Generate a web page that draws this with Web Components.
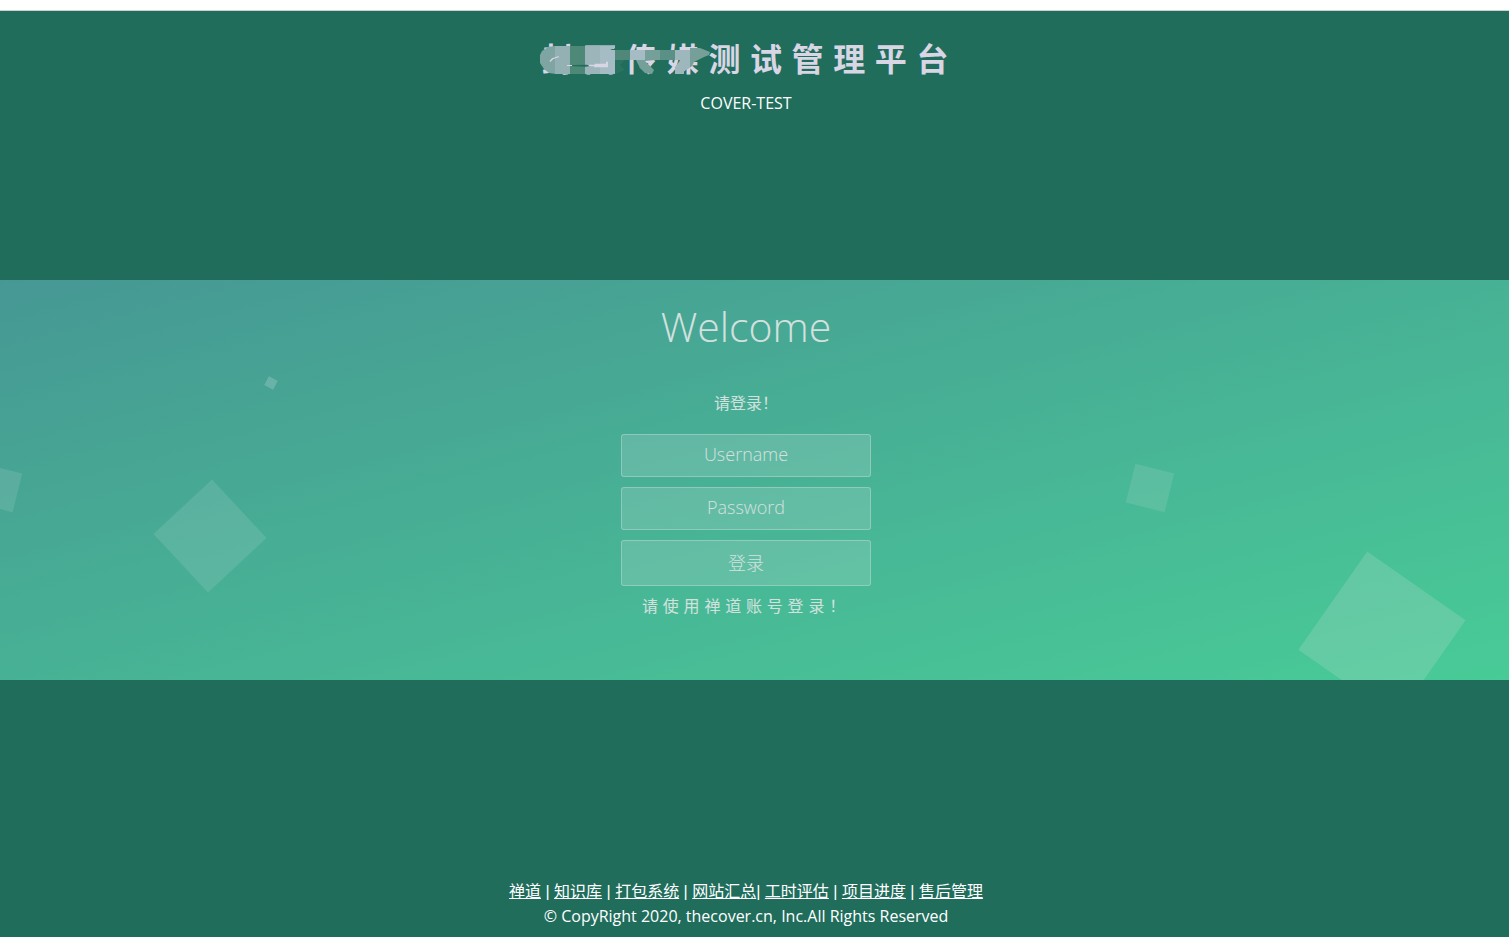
<!DOCTYPE html>
<html lang="zh-CN">
<head>
<meta charset="utf-8">
<title>测试管理平台</title>
<style>
  body {
    margin: 0;
    font: 16px/24px "Open Sans", "Noto Sans CJK SC", sans-serif;
    color: #fff;
    background: #206d5c;
  }
</style>
</head>
<body>
<login-page></login-page>

<template id="login-page">
  <style>
    :host {
      --gutter: 17px;
      display: flex;
      flex-direction: column;
      min-height: 100vh;
      box-sizing: border-box;
      border-top: 10px solid #fff;
    }
    site-header { min-height: 270px; }
    site-footer { flex: 1; }
  </style>
  <site-header><span slot="title">封面传媒测试管理平台</span><span slot="subtitle">COVER-TEST</span></site-header>
  <login-band></login-band>
  <site-footer></site-footer>
</template>

<template id="site-header">
  <style>
    :host {
      display: block;
      box-sizing: border-box;
      border-top: 1px solid #c9d3d0;
      padding: 24px var(--gutter) 0 0;
      text-align: center;
    }
    h1 {
      position: relative;
      width: fit-content;
      margin: 0 auto;
      padding-left: 8px;
      font-size: 32px;
      line-height: 48px;
      letter-spacing: 0.3em;
      color: #d8d5e4;
    }
    svg { position: absolute; left: 5px; top: 8px; }
    p { margin: 8px 0 0; }
  </style>
  <h1><slot name="title"></slot>
    <svg width="172" height="32" viewBox="27 24 516 96" aria-hidden="true">
      <defs><clipPath id="smear">
        <path d="M30 60L36 48L54 36L75 33H243L258 30L255 39L240 45H480V39H510L525 45L540 51L537 60L522 66L510 72L492 81L486 93L474 102L462 108V117H435V96L447 81L450 75H375L345 78L360 93L372 105L366 117L345 114L330 99L318 75H285L270 90L285 105L255 117H78L57 114L42 102L30 84Z"/>
      </clipPath></defs>
      <g clip-path="url(#smear)">
        <path fill="#7fa5a3" d="M27 24H76V120H27z"/>
        <path fill="#93b1b3" d="M75 24H121V120H75z"/>
        <path fill="#4e8877" d="M120 24H166V120H120z"/>
        <path fill="#9cb5bb" d="M165 24H211V120H165z"/>
        <path fill="#a6bcc4" d="M210 24H255V120H210z"/>
        <path fill="#2c7260" d="M255 24H300V120H255z"/>
        <path fill="#4f8878" d="M255 45H300V75H255z"/>
        <path fill="#a6bcc4" d="M300 24H345V75H300z"/>
        <path fill="#759f99" d="M345 24H391V75H345zM300 75H391V120H300z"/>
        <path fill="#5a9085" d="M390 24H435V120H390z"/>
        <path fill="#9eb7bc" d="M435 24H481V120H435z"/>
        <path fill="#769f99" d="M480 24H543V120H480z"/>
      </g>
      <path fill="#206d5c" d="M105 92L135 90L168 89L190 92L165 95L120 93z"/>
      <path fill="#d8d5e4" d="M58 79L66 70L87 63L86 67L70 72L62 80zM110 90H126V93H110zM176 89H194V86H228V80H234V97H192V94H176z"/>
    </svg>
  </h1>
  <p><slot name="subtitle"></slot></p>
</template>

<template id="login-band">
  <style>
    :host {
      display: block;
      position: relative;
      height: 400px;
      overflow: hidden;
      opacity: 0.8;
      background: linear-gradient(to bottom right, #50a3a2, #53e3a6);
    }
    section {
      position: relative;
      box-sizing: border-box;
      padding: 16px var(--gutter) 0 0;
      text-align: center;
    }
    h2 {
      margin: 0;
      font-size: 41px;
      line-height: 60px;
      font-weight: 300;
    }
    .hint { margin: 35px 0 19px; }
    .note { margin: 8px 0 0; letter-spacing: 0.3em; }
    form {
      display: flex;
      flex-direction: column;
      align-items: center;
      gap: 10px;
    }
    input, button {
      box-sizing: border-box;
      width: 250px;
      height: 43px;
      margin: 0;
      padding: 0 15px 4px;
      border: 1px solid rgba(255, 255, 255, 0.4);
      border-radius: 3px;
      background: rgba(255, 255, 255, 0.2);
      color: #fff;
      font: 300 18px "Open Sans", "Noto Sans CJK SC", sans-serif;
      text-align: center;
    }
    input::placeholder { color: #fff; opacity: 1; }
    button { height: 46px; padding-bottom: 2px; }
    i {
      position: absolute;
      background: rgba(255, 255, 255, 0.15);
    }
    .a { width: 80px; height: 80px; left: 170px; bottom: 104px; transform: rotate(47deg); }
    .b { width: 10px; height: 10px; left: 266px; bottom: 292px; transform: rotate(28deg); background: rgba(255, 255, 255, 0.25); }
    .c { width: 40px; height: 40px; left: -22px; bottom: 172px; transform: rotate(14deg); }
    .d { width: 40px; height: 40px; right: 339px; bottom: 172px; transform: rotate(14deg); }
    .e { width: 120px; height: 120px; right: 67px; bottom: -15px; transform: rotate(35deg); background: rgba(255, 255, 255, 0.2); }
  </style>
  <i class="a"></i><i class="b"></i><i class="c"></i><i class="d"></i><i class="e"></i>
  <section>
    <h2>Welcome</h2>
    <p class="hint">请登录！</p>
    <form>
      <input type="text" name="username" placeholder="Username" aria-label="Username">
      <input type="password" name="password" placeholder="Password" aria-label="Password">
      <button type="button">登录</button>
    </form>
    <p class="note">请使用禅道账号登录！</p>
  </section>
</template>

<template id="site-footer">
  <style>
    :host {
      display: flex;
      flex-direction: column;
      justify-content: flex-end;
      box-sizing: border-box;
      padding: 0 var(--gutter) 8px 0;
      text-align: center;
    }
    p { margin: 0; line-height: 25px; }
    .links { font-family: "Liberation Sans", "Noto Sans CJK SC", sans-serif; }
    a { color: inherit; }
  </style>
  <p class="links"><a href="#">禅道</a> | <a href="#">知识库</a> | <a href="#">打包系统</a> | <a href="#">网站汇总</a>| <a href="#">工时评估</a> | <a href="#">项目进度</a> | <a href="#">售后管理</a></p>
  <p>© CopyRight 2020, thecover.cn, Inc.All Rights Reserved</p>
</template>

<script>
  for (const name of ['site-header', 'login-band', 'site-footer', 'login-page']) {
    customElements.define(name, class extends HTMLElement {
      constructor() {
        super();
        this.attachShadow({ mode: 'open' })
          .append(document.getElementById(name).content.cloneNode(true));
      }
    });
  }
</script>
</body>
</html>
